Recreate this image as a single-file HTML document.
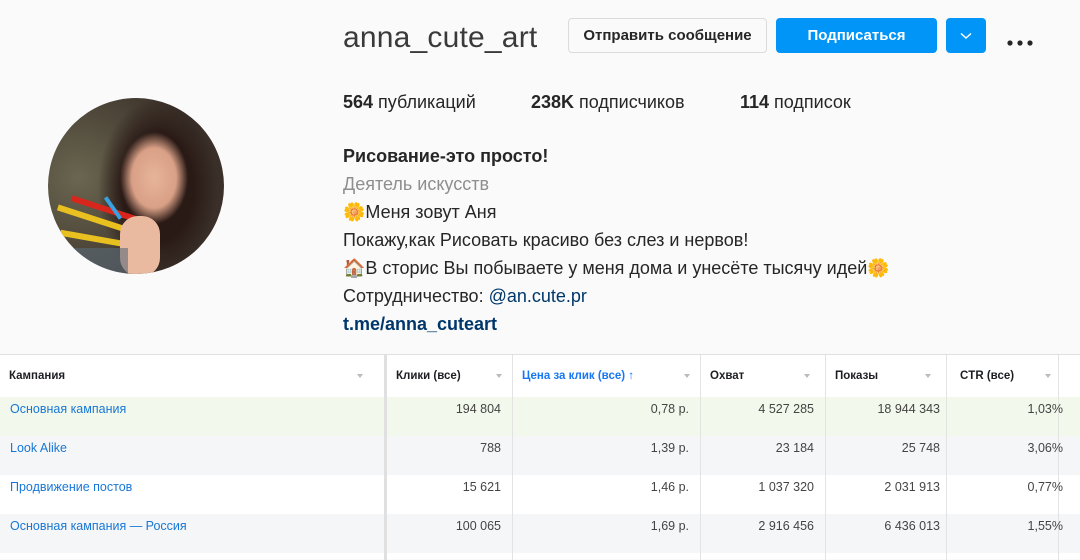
<!DOCTYPE html>
<html><head><meta charset="utf-8"><style>
*{margin:0;padding:0;box-sizing:border-box}
body{width:1080px;height:559px;overflow:hidden;background:#fafafa;font-family:"Liberation Sans","DejaVu Sans",sans-serif;position:relative;color:#262626}
.a{position:absolute;white-space:nowrap}
.btn{position:absolute;border-radius:4px;font-size:15px;font-weight:bold;display:flex;align-items:center;justify-content:center}
.bio{position:absolute;left:343px;font-size:18px;line-height:28px}
.tbl{position:absolute;left:0;top:354px;width:1080px;height:205px;background:#fff;border-top:1px solid #e0e0e0;font-size:12px}
.row{position:absolute;left:0;width:1080px}
.hd{font-weight:bold;color:#1c1e21;font-size:11.5px}
.arr{position:absolute;width:0;height:0;border-left:3.5px solid transparent;border-right:3.5px solid transparent;border-top:4px solid #bbb;top:19px}
.num{position:absolute;color:#444;font-size:12.5px;text-align:right}
.lnk{color:#1877d6;font-size:12.5px}
.vl{position:absolute;top:0;height:205px;width:1px;background:#e3e3e3}
</style></head><body>
<div class="a" style="left:343px;top:21px;font-size:30px;color:#3a3a3a;letter-spacing:0.2px">anna_cute_art</div>
<div class="btn" style="left:568px;top:18px;width:199px;height:35px;background:#fafafa;border:1px solid #dbdbdb;color:#262626">Отправить сообщение</div>
<div class="btn" style="left:776px;top:18px;width:161px;height:35px;background:#0095f6;color:#fff">Подписаться</div>
<div class="btn" style="left:946px;top:18px;width:40px;height:35px;background:#0095f6"><svg width="14" height="8" viewBox="0 0 14 8"><path d="M2 1.5L7 6l5-4.5" fill="none" stroke="#fff" stroke-width="1.5"/></svg></div>
<div class="a" style="left:1007px;top:33px"><svg width="26" height="6"><circle cx="3" cy="3" r="2.6" fill="#262626"/><circle cx="13" cy="3" r="2.6" fill="#262626"/><circle cx="23" cy="3" r="2.6" fill="#262626"/></svg></div>
<div class="a" style="left:343px;top:92px;font-size:18px"><b>564</b> публикаций</div>
<div class="a" style="left:531px;top:92px;font-size:18px"><b>238K</b> подписчиков</div>
<div class="a" style="left:740px;top:92px;font-size:18px"><b>114</b> подписок</div>
<div class="a" style="left:48px;top:98px;width:176px;height:176px;border-radius:50%;overflow:hidden;background:radial-gradient(ellipse 34px 46px at 106px 80px,#e6b49a 0%,#d9a086 65%,transparent 100%),radial-gradient(ellipse 60px 90px at 110px 90px,#2a1a16 60%,transparent 100%),radial-gradient(circle at 30px 80px,#6a6650,#3a3029 70%),#3a2a22">
<div style="position:absolute;left:8px;top:118px;width:75px;height:6px;background:#e8c020;transform:rotate(18deg)"></div>
<div style="position:absolute;left:22px;top:108px;width:70px;height:6px;background:#d8261d;transform:rotate(18deg)"></div>
<div style="position:absolute;left:12px;top:138px;width:72px;height:6px;background:#e8c020;transform:rotate(10deg)"></div>
<div style="position:absolute;left:52px;top:108px;width:26px;height:4px;background:#3aa0e0;transform:rotate(55deg)"></div>
<div style="position:absolute;left:72px;top:118px;width:40px;height:60px;border-radius:18px;background:#e9b9a0"></div>
<div style="position:absolute;left:20px;top:150px;width:60px;height:30px;background:#5a6a7a;opacity:.6"></div>
</div>
<div class="bio" style="top:142px;font-weight:bold;color:#262626">Рисование-это просто!</div>
<div class="bio" style="top:170px;color:#8e8e8e">Деятель искусств</div>
<div class="bio" style="top:198px">🌼Меня зовут Аня</div>
<div class="bio" style="top:226px">Покажу,как Рисовать красиво без слез и нервов!</div>
<div class="bio" style="top:254px">🏠В сторис Вы побываете у меня дома и унесёте тысячу идей🌼</div>
<div class="bio" style="top:282px">Сотрудничество: <span style="color:#00376b">@an.cute.pr</span></div>
<div class="bio" style="top:310px;font-weight:bold;color:#00376b">t.me/anna_cuteart</div>

<div class="tbl">
<div class="row" style="top:42px;height:39px;background:#f2f9ec"></div>
<div class="row" style="top:81px;height:39px;background:#f5f6f7"></div>
<div class="row" style="top:120px;height:39px;background:#fff"></div>
<div class="row" style="top:159px;height:39px;background:#f5f6f7"></div>
<div class="vl" style="left:384px;width:3px;background:#e0e0e0"></div>
<div class="vl" style="left:512px"></div>
<div class="vl" style="left:700px"></div>
<div class="vl" style="left:825px"></div>
<div class="vl" style="left:946px"></div>
<div class="vl" style="left:1058px"></div>
<div class="a hd" style="left:9px;top:15px">Кампания</div><div class="arr" style="left:357px"></div>
<div class="a hd" style="left:396px;top:15px">Клики (все)</div><div class="arr" style="left:496px"></div>
<div class="a hd" style="left:522px;top:15px;color:#1877f2">Цена за клик (все) ↑</div><div class="arr" style="left:684px"></div>
<div class="a hd" style="left:710px;top:15px">Охват</div><div class="arr" style="left:804px"></div>
<div class="a hd" style="left:835px;top:15px">Показы</div><div class="arr" style="left:925px"></div>
<div class="a hd" style="left:960px;top:15px">CTR (все)</div><div class="arr" style="left:1045px"></div>

<div class="a lnk" style="left:10px;top:47px">Основная кампания</div>
<div class="a lnk" style="left:10px;top:86px">Look Alike</div>
<div class="a lnk" style="left:10px;top:125px">Продвижение постов</div>
<div class="a lnk" style="left:10px;top:164px">Основная кампания — Россия</div>

<div class="num" style="right:579px;top:47px">194 804</div>
<div class="num" style="right:579px;top:86px">788</div>
<div class="num" style="right:579px;top:125px">15 621</div>
<div class="num" style="right:579px;top:164px">100 065</div>

<div class="num" style="right:391px;top:47px">0,78 р.</div>
<div class="num" style="right:391px;top:86px">1,39 р.</div>
<div class="num" style="right:391px;top:125px">1,46 р.</div>
<div class="num" style="right:391px;top:164px">1,69 р.</div>

<div class="num" style="right:266px;top:47px">4 527 285</div>
<div class="num" style="right:266px;top:86px">23 184</div>
<div class="num" style="right:266px;top:125px">1 037 320</div>
<div class="num" style="right:266px;top:164px">2 916 456</div>

<div class="num" style="right:140px;top:47px">18 944 343</div>
<div class="num" style="right:140px;top:86px">25 748</div>
<div class="num" style="right:140px;top:125px">2 031 913</div>
<div class="num" style="right:140px;top:164px">6 436 013</div>

<div class="num" style="right:17px;top:47px">1,03%</div>
<div class="num" style="right:17px;top:86px">3,06%</div>
<div class="num" style="right:17px;top:125px">0,77%</div>
<div class="num" style="right:17px;top:164px">1,55%</div>
</div>
</body></html>
